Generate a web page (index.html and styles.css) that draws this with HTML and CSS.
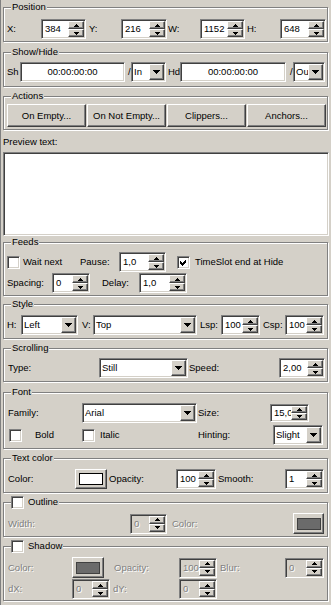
FILE: index.html
```html
<!DOCTYPE html>
<html>
<head>
<meta charset="utf-8">
<link rel="stylesheet" href="styles.css">
</head>
<body>
<div class="panel">

  <section class="group g-pos">
    <div class="title">Position</div>
    <div class="row r-pos">
      <span class="lbl p0">X:</span>
      <div class="spin"><span class="val">384</span><span class="sb"><i class="up"></i><i class="dn"></i></span></div>
      <span class="lbl p3">Y:</span>
      <div class="spin"><span class="val">216</span><span class="sb"><i class="up"></i><i class="dn"></i></span></div>
      <span class="lbl p1">W:</span>
      <div class="spin"><span class="val">1152</span><span class="sb"><i class="up"></i><i class="dn"></i></span></div>
      <span class="lbl p2">H:</span>
      <div class="spin"><span class="val">648</span><span class="sb"><i class="up"></i><i class="dn"></i></span></div>
    </div>
  </section>

  <section class="group g-sh">
    <div class="title">Show/Hide</div>
    <div class="row r-sh">
      <span class="lbl p0">Sh</span>
      <div class="edit">00:00:00:00</div>
      <span class="lbl p3">/</span>
      <div class="combo"><span class="val">In</span><span class="dd"><i></i></span></div>
      <span class="lbl p2">Hd</span>
      <div class="edit">00:00:00:00</div>
      <span class="lbl p4">/</span>
      <div class="combo"><span class="val">Ou</span><span class="dd"><i></i></span></div>
    </div>
  </section>

  <section class="group g-act">
    <div class="title">Actions</div>
    <div class="row r-act">
      <div class="btn">On Empty...</div>
      <div class="btn">On Not Empty...</div>
      <div class="btn">Clippers...</div>
      <div class="btn">Anchors...</div>
    </div>
  </section>

  <div class="preview-lbl">Preview text:</div>
  <div class="textarea"></div>

  <section class="group g-feeds">
    <div class="title">Feeds</div>
    <div class="row r-f1">
      <span class="check"></span>
      <span class="lbl p3">Wait next</span>
      <span class="lbl p0">Pause:</span>
      <div class="spin"><span class="val">1,0</span><span class="sb"><i class="up"></i><i class="dn"></i></span></div>
      <span class="check on end"><svg width="7" height="7" viewBox="0 0 7 7"><path d="M0 2 L2 4 L6 0 L6 3 L2 7 L0 5 Z"/></svg></span>
      <span class="lbl p5">TimeSlot end at Hide</span>
    </div>
    <div class="row r-f2">
      <span class="lbl p0">Spacing:</span>
      <div class="spin"><span class="val">0</span><span class="sb"><i class="up"></i><i class="dn"></i></span></div>
      <span class="lbl p12">Delay:</span>
      <div class="spin"><span class="val">1,0</span><span class="sb"><i class="up"></i><i class="dn"></i></span></div>
    </div>
  </section>

  <section class="group g-style">
    <div class="title">Style</div>
    <div class="row r-style">
      <span class="lbl p0">H:</span>
      <div class="combo"><span class="val">Left</span><span class="dd"><i></i></span></div>
      <span class="lbl p4">V:</span>
      <div class="combo"><span class="val">Top</span><span class="dd"><i></i></span></div>
      <span class="lbl p3">Lsp:</span>
      <div class="spin"><span class="val">100</span><span class="sb"><i class="up"></i><i class="dn"></i></span></div>
      <span class="lbl p3">Csp:</span>
      <div class="spin"><span class="val">100</span><span class="sb"><i class="up"></i><i class="dn"></i></span></div>
    </div>
  </section>

  <section class="group g-scroll">
    <div class="title">Scrolling</div>
    <div class="row r-scroll">
      <span class="lbl p0">Type:</span>
      <div class="combo"><span class="val">Still</span><span class="dd"><i></i></span></div>
      <span class="lbl p1">Speed:</span>
      <div class="spin"><span class="val">2,00</span><span class="sb"><i class="up"></i><i class="dn"></i></span></div>
    </div>
  </section>

  <section class="group g-font">
    <div class="title">Font</div>
    <div class="row r-font1">
      <span class="lbl p0">Family:</span>
      <div class="combo"><span class="val">Arial</span><span class="dd"><i></i></span></div>
      <span class="lbl p1">Size:</span>
      <div class="spin short"><span class="val">15,0</span><span class="sb"><i class="up"></i><i class="dn"></i></span></div>
    </div>
    <div class="row r-font2">
      <span class="check"></span>
      <span class="lbl p13">Bold</span>
      <span class="check"></span>
      <span class="lbl p5">Italic</span>
      <span class="lbl p0">Hinting:</span>
      <div class="combo"><span class="val">Slight</span><span class="dd"><i></i></span></div>
    </div>
  </section>

  <section class="group g-tc">
    <div class="title">Text color</div>
    <div class="row r-tc">
      <span class="lbl p0">Color:</span>
      <div class="btn cbtn"><span class="swatch white"></span></div>
      <span class="lbl p2">Opacity:</span>
      <div class="spin"><span class="val">100</span><span class="sb"><i class="up"></i><i class="dn"></i></span></div>
      <span class="lbl p2">Smooth:</span>
      <div class="spin"><span class="val">1</span><span class="sb"><i class="up"></i><i class="dn"></i></span></div>
    </div>
  </section>

  <section class="group g-out">
    <div class="title chk-title"><span class="check"></span><span class="tt">Outline</span></div>
    <div class="row r-out">
      <span class="lbl p0 dis">Width:</span>
      <div class="spin off"><span class="val">0</span><span class="sb"><i class="up"></i><i class="dn"></i></span></div>
      <span class="lbl p5 dis">Color:</span>
      <div class="btn cbtn tall"><span class="swatch gray"></span></div>
    </div>
  </section>

  <section class="group g-shadow">
    <div class="title chk-title"><span class="check"></span><span class="tt">Shadow</span></div>
    <div class="row r-sh1">
      <span class="lbl p0 dis">Color:</span>
      <div class="btn cbtn tall"><span class="swatch gray"></span></div>
      <span class="lbl p10 dis">Opacity:</span>
      <div class="spin off"><span class="val">100</span><span class="sb"><i class="up"></i><i class="dn"></i></span></div>
      <span class="lbl p3 dis">Blur:</span>
      <div class="spin off"><span class="val">0</span><span class="sb"><i class="up"></i><i class="dn"></i></span></div>
    </div>
    <div class="row r-sh2">
      <span class="lbl p0 dis">dX:</span>
      <div class="spin off"><span class="val">0</span><span class="sb"><i class="up"></i><i class="dn"></i></span></div>
      <span class="lbl p3 dis">dY:</span>
      <div class="spin off"><span class="val">0</span><span class="sb"><i class="up"></i><i class="dn"></i></span></div>
    </div>
  </section>

</div>
</body>
</html>
```

FILE: styles.css
```css
* { box-sizing: border-box; }
html, body { margin: 0; padding: 0; }
body {
  width: 331px;
  height: 605px;
  overflow: hidden;
  background: #d4d0c8;
  color: #000;
  font-family: "Liberation Sans", Arial, sans-serif;
  font-size: 9.5px;
  line-height: 12px;
}
.panel {
  height: 605px;
  border-left: 1px solid #808080;
  padding-left: 2px;
  display: flex;
  flex-direction: column;
  align-items: flex-start;
}

/* etched group box */
.group {
  position: relative;
  width: 325px;
  border: 1px solid #808080;
  box-shadow: inset 1px 1px #fff, 1px 1px #fff;
}
.title {
  position: absolute;
  left: 7px;
  top: -7px;
  padding: 0 1px;
  background: #d4d0c8;
  line-height: 12px;
  white-space: nowrap;
}
.chk-title {
  display: flex;
  align-items: center;
  height: 14px;
  top: -8px;
  padding: 0 1px 0 0;
}
.chk-title .tt { margin-left: 4px; }

.g-pos { margin-top: 7px; padding: 11px 0 2px; }
.g-sh { margin-top: 10px; padding: 9px 0 4px; }
.g-act { margin-top: 9px; padding: 7px 0 2px; }
.g-feeds { margin-top: 6px; padding: 9px 0 2px; display: flex; flex-direction: column; gap: 1px; }
.g-style { margin-top: 8px; padding: 10px 0 3px; }
.g-scroll { margin-top: 9px; padding: 9px 0 3px; }
.g-font { margin-top: 10px; padding: 10px 0 3px; display: flex; flex-direction: column; gap: 2px; }
.g-tc { margin-top: 9px; padding: 10px 0 3px; }
.g-out { margin-top: 9px; padding: 10px 0 3px; }
.g-shadow { margin-top: 9px; padding: 10px 0 1px; display: flex; flex-direction: column; gap: 2px; }

.preview-lbl { margin-top: 6px; height: 12px; margin-bottom: 4px; }
.textarea {
  width: 326px;
  height: 84px;
  background: #fff;
  border: 1px solid;
  border-color: #808080 #fff #fff #808080;
  box-shadow: inset 1px 1px #404040, inset -1px -1px #d4d0c8;
}

/* rows */
.row {
  display: grid;
  align-items: center;
  height: 20px;
}
.r-pos { padding-left: 3px; grid-template-columns: 34px 45px 35px 46px 33px 45px 35px 46px; }
.r-sh { padding-left: 3px; grid-template-columns: 13px 105px 6px 35px 14px 106px 7px 32px; }
.r-act { padding-left: 3px; height: 23px; grid-template-columns: repeat(4, 79px); column-gap: 1px; }
.r-f1 { padding-left: 3px; grid-template-columns: 13px 60px 39px 47px 24px auto; }
.r-f2 { padding-left: 3px; grid-template-columns: 45px 38px 49px 48px; }
.r-style { padding-left: 3px; grid-template-columns: 14px 57px 15px 104px 24px 39px 25px 39px; }
.r-scroll { padding-left: 4px; grid-template-columns: 91px 89px 91px 46px; }
.r-font1 { padding-left: 4px; grid-template-columns: 74px 115px 73px 39px; }
.r-font2 { padding-left: 5px; grid-template-columns: 13px 60px 13px 103px 75px 50px; }
.r-tc { padding-left: 4px; grid-template-columns: 67px 32px 69px 40px 69px 39px; }
.r-out { padding-left: 4px; grid-template-columns: 122px 37px 126px 31px; }
.r-sh1 { padding-left: 4px; grid-template-columns: 64px 32px 75px 38px 68px 39px; }
.r-sh2 { padding-left: 4px; grid-template-columns: 64px 38px 69px 38px; }

.lbl { white-space: nowrap; padding-left: 2px; }
.p0 { padding-left: 0; }
.p1 { padding-left: 1px; }
.p2 { padding-left: 2px; }
.p3 { padding-left: 3px; }
.p4 { padding-left: 4px; }
.p5 { padding-left: 5px; }
.p10 { padding-left: 10px; }
.p12 { padding-left: 12px; }
.p13 { padding-left: 13px; }
.dis { color: #808080; text-shadow: 1px 1px #fff; }

/* sunken fields */
.spin, .combo, .edit {
  height: 20px;
  background: #fff;
  border: 1px solid;
  border-color: #808080 #fff #fff #808080;
  box-shadow: inset 1px 1px #404040, inset -1px -1px #d4d0c8;
  padding: 1px;
  display: flex;
  white-space: nowrap;
  overflow: hidden;
}
.spin.short { height: 18px; }
.spin .val, .combo .val { flex: 1; min-width: 0; line-height: 16px; }
.spin .val { padding-left: 2px; }
.spin.short .val { line-height: 14px; }
.combo .val { padding-left: 1px; }
.edit { justify-content: center; line-height: 16px; }
.spin.off { background: #d4d0c8; }
.spin.off .val { color: #808080; text-shadow: 1px 1px #fff; }

/* spin buttons */
.sb { width: 16px; flex: none; display: flex; flex-direction: column; }
.sb i, .combo .dd {
  display: flex;
  align-items: center;
  justify-content: center;
  background: #d4d0c8;
  border: 1px solid;
  border-color: #fff #404040 #404040 #fff;
  box-shadow: inset -1px -1px #808080;
}
.sb i { flex: 1; }
.sb i::after { content: ""; width: 5px; height: 3px; }
.sb .up::after {
  background:
    linear-gradient(#000, #000) 2px 0 / 1px 1px no-repeat,
    linear-gradient(#000, #000) 1px 1px / 3px 1px no-repeat,
    linear-gradient(#000, #000) 0 2px / 5px 1px no-repeat;
}
.sb .dn::after {
  background:
    linear-gradient(#000, #000) 0 0 / 5px 1px no-repeat,
    linear-gradient(#000, #000) 1px 1px / 3px 1px no-repeat,
    linear-gradient(#000, #000) 2px 2px / 1px 1px no-repeat;
}

/* combo drop button */
.combo .dd { width: 15px; flex: none; }
.combo .dd i {
  width: 7px;
  height: 4px;
  background:
    linear-gradient(#000, #000) 0 0 / 7px 1px no-repeat,
    linear-gradient(#000, #000) 1px 1px / 5px 1px no-repeat,
    linear-gradient(#000, #000) 2px 2px / 3px 1px no-repeat,
    linear-gradient(#000, #000) 3px 3px / 1px 1px no-repeat;
}

/* check boxes */
.check {
  width: 13px;
  height: 13px;
  background: #fff;
  border: 1px solid;
  border-color: #808080 #fff #fff #808080;
  box-shadow: inset 1px 1px #404040, inset -1px -1px #d4d0c8;
  display: flex;
  align-items: center;
  justify-content: center;
}
.check.end { justify-self: end; }
.check svg { display: block; fill: #000; shape-rendering: crispEdges; }

/* push buttons */
.btn {
  height: 23px;
  background: #d4d0c8;
  border: 1px solid;
  border-color: #fff #404040 #404040 #fff;
  box-shadow: inset -1px -1px #808080;
  display: flex;
  align-items: center;
  justify-content: center;
  white-space: nowrap;
}
.cbtn { height: 20px; }
.cbtn.tall { height: 21px; }
.swatch { width: 24px; height: 12px; border: 1px solid #000; }
.swatch.white { background: #fff; }
.swatch.gray { background: #6b6b6b; border-color: #404040; }
```
